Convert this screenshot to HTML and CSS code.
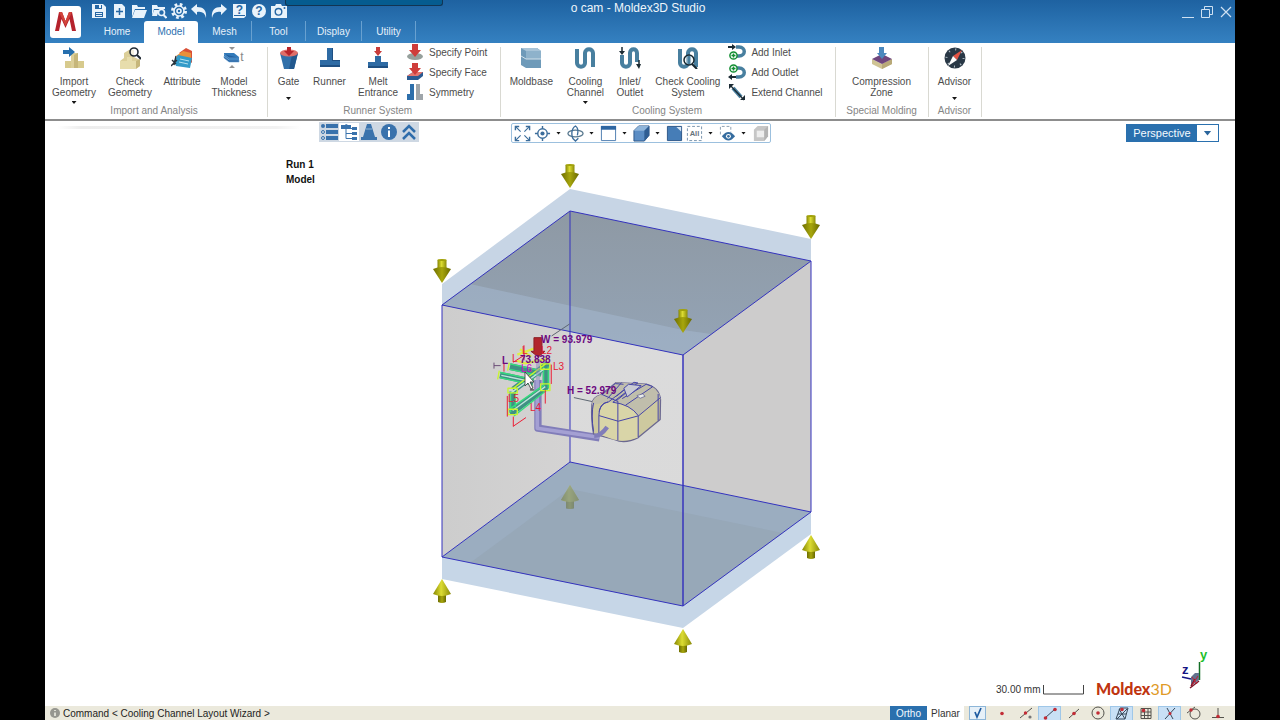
FILE: index.html
```html
<!DOCTYPE html>
<html lang="en">
<head>
<meta charset="utf-8">
<title>o cam - Moldex3D Studio</title>
<link rel="stylesheet" href="styles.css">
</head>
<body>
<div class="app">
  <header class="header">
    <div class="titlebar">
      <div class="quick">
        <button class="quick-btn" aria-label="Save"><svg viewBox="0 0 16 16"><path d="M1 1h11l3 3v11H1z" fill="#e9f3fb"/><path d="M4 2h7v4H4zM4 9h8v5H4z" fill="#2667a4"/><path d="M8 2h2v3H8zM5 10h6v1H5zM5 12h6v1H5z" fill="#e9f3fb"/></svg></button>
        <button class="quick-btn" aria-label="New"><svg viewBox="0 0 16 16"><path d="M3 1h8l3 3v11H3z" fill="#e9f3fb"/><path d="M8.500 5v7M5 8.500h7" stroke="#2667a4" stroke-width="1.500"/></svg></button>
        <button class="quick-btn" aria-label="Open"><svg viewBox="0 0 16 16"><path d="M1 14V2h5l1 2h7v2H4z" fill="#e9f3fb"/><path d="M4 7h12l-3 8H1z" fill="#e9f3fb"/></svg></button>
        <button class="quick-btn" aria-label="Find project"><svg viewBox="0 0 16 16"><path d="M1 13V2h5l1 2h7v2H3z" fill="#e9f3fb"/><path d="M3 7h5l-2 6H1z" fill="#e9f3fb"/><circle cx="10.500" cy="9.500" r="3" fill="none" stroke="#e9f3fb" stroke-width="1.600"/><path d="M12.500 12l3 3" stroke="#e9f3fb" stroke-width="2"/></svg></button>
        <button class="quick-btn" aria-label="Settings"><svg viewBox="0 0 16 16"><circle cx="8" cy="8" r="6.500" fill="none" stroke="#e9f3fb" stroke-width="3" stroke-dasharray="2.600 2.500"/><circle cx="8" cy="8" r="5" fill="none" stroke="#e9f3fb" stroke-width="1.600"/><circle cx="8" cy="8" r="2" fill="none" stroke="#e9f3fb" stroke-width="1.600"/></svg></button>
        <button class="quick-btn" aria-label="Undo"><svg viewBox="0 0 16 16"><path d="M0 6l6-5v3c6 0 10 3 9 11-1-5-4-7-9-6v3z" fill="#e9f3fb"/></svg></button>
        <button class="quick-btn" aria-label="Redo"><svg viewBox="0 0 16 16"><path d="M16 6l-6-5v3C4 4 0 7 1 15c1-5 4-7 9-6v3z" fill="#e9f3fb"/></svg></button>
        <button class="quick-btn" aria-label="Manual"><svg viewBox="0 0 16 16"><path d="M2 1h13v12l-2 2H2z" fill="#e9f3fb"/><path d="M3 12.500h11" stroke="#2667a4"/><text x="8.500" y="10.500" class="glyph glyph-blue">?</text></svg></button>
        <button class="quick-btn" aria-label="Help"><svg viewBox="0 0 16 16"><circle cx="8" cy="8" r="7" fill="#e9f3fb"/><text x="8" y="12" class="glyph glyph-blue">?</text></svg></button>
        <button class="quick-btn" aria-label="Capture"><svg viewBox="0 0 16 16"><path d="M0 3h4l1-2h5l1 2h5v12H0z" fill="#e9f3fb"/><circle cx="7.500" cy="8.800" r="3.300" fill="none" stroke="#2667a4" stroke-width="1.400"/><circle cx="13.500" cy="5" r="1" fill="#2667a4"/></svg></button>
      </div>
      <h1 class="title">o cam - Moldex3D Studio</h1>
      <div class="window-controls">
        <button class="win-btn" aria-label="Minimize"><svg viewBox="0 0 14 14"><path d="M1 12.500h12" stroke="#cfe1f2"/></svg></button>
        <button class="win-btn" aria-label="Restore"><svg viewBox="0 0 14 14"><path d="M1.500 4.500h8v8h-8zM4.500 4V1.500h8v8H10" fill="none" stroke="#cfe1f2"/></svg></button>
        <button class="win-btn" aria-label="Close"><svg viewBox="0 0 14 14"><path d="M2 2l10 10M12 2L2 12" stroke="#cfe1f2" stroke-width="1.200"/></svg></button>
      </div>
    </div>
    <button class="logo" aria-label="Application menu"><svg viewBox="0 0 31 32"><path d="M5 25L9 6h3l3.500 9L19 6h3l4 19h-4l-2.500-12-4 9-4-9L9 25z" fill="#b5222c"/><path d="M9 6h3l3.500 9L19 6h3l-6.500 14z" fill="#d2453c"/></svg></button>
    <nav class="tabs">
      <a class="tab" href="#home">Home</a>
      <a class="tab tab-active" href="#model" aria-current="page">Model</a>
      <a class="tab tab-lined" href="#mesh">Mesh</a>
      <a class="tab tab-lined" href="#tool">Tool</a>
      <a class="tab tab-lined tab-wide" href="#display">Display</a>
      <a class="tab tab-lined" href="#utility">Utility</a>
    </nav>
    <div class="top-flap"></div>
  </header>

  <section class="ribbon">
    <div class="group">
      <div class="items">
        <button class="item item-md"><svg class="big-icon" viewBox="0 0 22 22"><path d="M2 14h6V6h7v8h6v7H2z" fill="#dccf99"/><path d="M15 6l-4 2v13h4z" fill="#c6b67a"/><path d="M2 14h6v7H2zM15 14h6v7h-6z" fill="#d7ca8d"/><path d="M0 3h6V0l6 5-6 5V7H0z" fill="#266fae"/></svg><span>Import<br>Geometry</span><i class="caret"></i></button>
        <button class="item item-md"><svg class="big-icon" viewBox="0 0 22 22"><path d="M1 14l4-3V6l5-3h5v7l6 3v6l-5 3H1z" fill="#dccf99"/><path d="M1 14h7v-4h5v4h4v8H1z" fill="#e7ddac"/><path d="M17 14l4-2v7l-4 3z" fill="#c6b67a"/><circle cx="15" cy="5" r="4" fill="#fff" fill-opacity=".7" stroke="#222b35" stroke-width="1.600"/><path d="M18 8l4 4" stroke="#222b35" stroke-width="2"/></svg><span>Check<br>Geometry</span></button>
        <button class="item item-sm"><svg class="big-icon" viewBox="0 0 22 22"><path d="M8 6l7-5 6 3v12z" fill="#d95037"/><path d="M5 9l7-5 8 2v10z" fill="#e9903a"/><path d="M7 8l14 3-2 10-14-2-2-5z" fill="#329bc9"/><path d="M9 12l9 2M8 15l9 2" stroke="#b2e1ef"/><path d="M0 19l6-6M1 13l4 4M5 9l-2 9" stroke="#28323b" stroke-width="1.400"/></svg><span>Attribute</span></button>
        <button class="item item-md"><svg class="big-icon" viewBox="0 0 22 22"><path d="M1 6h10l5 4v3H6L1 9z" fill="#337bbb"/><path d="M1 7l5 4h10M1 9l5 4h10v2H6l-5-4z" fill="#2462a2" stroke="#70a8d9" stroke-width=".6"/><path d="M6 0h6l-3 3zM6 21h6l-3-3z" fill="#939393"/><text x="19" y="14" class="glyph glyph-gray">t</text></svg><span>Model<br>Thickness</span></button>
      </div>
      <div class="group-name">Import and Analysis</div>
    </div>
    <div class="group">
      <div class="items">
        <button class="item item-xs"><svg class="big-icon" viewBox="0 0 22 22"><path d="M2 6l4 16h10l4-16z" fill="#3170aa"/><path d="M14 8l6-2-4 16h-5z" fill="#22588e"/><ellipse cx="11" cy="6" rx="9" ry="3.500" fill="#df6f69"/><path d="M9 0h4v4h3l-5 5-5-5h3z" fill="#b8252c"/></svg><span>Gate</span><i class="caret"></i></button>
        <button class="item item-xs"><svg class="big-icon" viewBox="0 0 22 22"><path d="M8 1h6v12h7v7H1v-7h7z" fill="#2e6ba4"/><path d="M13 1h1v12h7v1h-8zM1 18h20v2H1z" fill="#1e4f82"/></svg><span>Runner</span></button>
        <button class="item item-md"><svg class="big-icon" viewBox="0 0 22 22"><path d="M8 9h6v6h7v6H1v-6h7z" fill="#2e6ba4"/><path d="M1 19h20v2H1z" fill="#1e4f82"/><path d="M9 0h4v4h2l-4 5-4-5h2z" fill="#c83c3a"/></svg><span>Melt<br>Entrance</span></button>
        <div class="list">
          <button class="row"><svg class="row-icon" viewBox="0 0 18 18"><ellipse cx="9" cy="13.500" rx="8" ry="3.500" fill="#96a09c"/><path d="M6 1h6v6h3l-6 7-6-7h3z" fill="#cf3d3b"/></svg>Specify Point</button>
          <button class="row"><svg class="row-icon" viewBox="0 0 18 18"><path d="M1 13l6-4h10v4l-5 4H1z" fill="#2b5b92"/><path d="M1 13l6-4h10l-5 4z" fill="#e4756e"/><path d="M6 0h6v5h3l-6 7-6-7h3z" fill="#cf3d3b"/></svg>Specify Face</button>
          <button class="row"><svg class="row-icon" viewBox="0 0 18 18"><path d="M4 1h4v16H1v-6h3z" fill="#2d6fab"/><path d="M10 1h4v10h3v6h-7z" fill="#9ea5aa"/></svg>Symmetry</button>
        </div>
      </div>
      <div class="group-name">Runner System</div>
    </div>
    <div class="group group-wide">
      <div class="items">
        <button class="item item-lg"><svg class="big-icon" viewBox="0 0 22 22"><path d="M1 1h16l4 3v17H6l-5-3z" fill="#6e9ab9"/><path d="M1 1h16l4 3H6z" fill="#a8c4d8"/><path d="M6 4h15v8H6z" fill="#8eb2cb"/><path d="M1 9l5 3h15" fill="none" stroke="#d1e0e9"/></svg><span>Moldbase</span></button>
        <button class="item item-sm"><svg class="big-icon" viewBox="0 0 22 22"><path d="M3 2v14c0 5 8 5 8 0V6c0-5 8-5 8 0v14" fill="none" stroke="#487f9f" stroke-width="4"/></svg><span>Cooling<br>Channel</span><i class="caret"></i></button>
        <button class="item item-xs"><svg class="big-icon" viewBox="0 0 22 22"><path d="M3 8v8c0 5 8 5 8 0V6c0-5 7-5 7 0v9" fill="none" stroke="#487f9f" stroke-width="4"/><path d="M3 0v4M20 13v5" stroke="#1c2b33" stroke-width="1.500"/><path d="M0 4h6L3 8zM17 17h5l-2 5z" fill="#1c2b33"/></svg><span>Inlet/<br>Outlet</span></button>
        <button class="item item-xl"><svg class="big-icon" viewBox="0 0 22 22"><path d="M3 2v14c0 5 8 5 8 0V6c0-5 8-5 8 0v14" fill="none" stroke="#487f9f" stroke-width="4"/><circle cx="12" cy="13" r="5" fill="#e8f2f5" fill-opacity=".6" stroke="#162730" stroke-width="1.500"/><path d="M12 9v8" stroke="#487f9f" stroke-width="3"/><path d="M15 17l5 5" stroke="#162730" stroke-width="2"/></svg><span>Check Cooling<br>System</span></button>
        <div class="list list-spaced">
          <button class="row"><svg class="row-icon" viewBox="0 0 18 18"><path d="M8 4h3c7 0 7 9 0 9H9" fill="none" stroke="#487f9f" stroke-width="3.500"/><circle cx="5.500" cy="12.500" r="3.600" fill="#fff" stroke="#118e32" stroke-width="1.500"/><path d="M5.500 10.500v4M3.500 12.500h4" stroke="#118e32" stroke-width="1.500"/><path d="M0 3h4V1l4 3-4 3V5H0z" fill="#1b2b34"/></svg>Add Inlet</button>
          <button class="row"><svg class="row-icon" viewBox="0 0 18 18"><path d="M9 5h2c7 0 7 9 0 9H8" fill="none" stroke="#487f9f" stroke-width="3.500"/><circle cx="5.500" cy="5.500" r="3.600" fill="#fff" stroke="#118e32" stroke-width="1.500"/><path d="M5.500 3.500v4M3.500 5.500h4" stroke="#118e32" stroke-width="1.500"/><path d="M8 13H4v-2l-4 3 4 3v-2h4z" fill="#1b2b34"/></svg>Add Outlet</button>
          <button class="row"><svg class="row-icon" viewBox="0 0 18 18"><path d="M5 5l8 9" stroke="#487f9f" stroke-width="4"/><path d="M2 2l14 15" stroke="#1b2b34" stroke-width="1.200"/><path d="M1 1h5L1 6zM17 17v-5l-5 5z" fill="#1b2b34"/></svg>Extend Channel</button>
        </div>
      </div>
      <div class="group-name">Cooling System</div>
    </div>
    <div class="group group-center">
      <div class="items">
        <button class="item item-xl"><svg class="big-icon" viewBox="0 0 22 22"><path d="M1 12l10 5 10-5v5l-10 5-10-5z" fill="#cfc394"/><path d="M11 17l10-5v5l-10 5z" fill="#b8a978"/><path d="M1 12l10-5 10 5-10 5z" fill="#6f467d"/><path d="M8 0h5v6h3l-5 6-5-6h2z" fill="#4b88bd"/></svg><span>Compression<br>Zone</span></button>
      </div>
      <div class="group-name">Special Molding</div>
    </div>
    <div class="group group-center">
      <div class="items">
        <button class="item item-sm"><svg class="big-icon" viewBox="0 0 22 22"><circle cx="11" cy="11" r="10.500" fill="#293846"/><circle cx="11" cy="11" r="8.500" fill="none" stroke="#b8c4cb" stroke-width="2" stroke-dasharray="1 5.675"/><path d="M18 3l-9 6 4 4z" fill="#e25445"/><path d="M4 19l5-10 4 4z" fill="#fff"/></svg><span>Advisor</span><i class="caret"></i></button>
      </div>
      <div class="group-name">Advisor</div>
    </div>
  </section>

  <div class="viewbar">
    <div class="ghost"></div>
    <div class="panel-tools">
      <button class="tool" aria-label="List"><svg viewBox="0 0 18 18"><path d="M6 1h12v4H6zM6 7h12v4H6zM6 13h12v4H6z" fill="#3972ac"/><circle cx="3" cy="3" r="2" fill="#3972ac"/><circle cx="3" cy="9" r="1.500" fill="none" stroke="#3972ac"/><circle cx="3" cy="15" r="1.500" fill="none" stroke="#3972ac"/></svg></button>
      <button class="tool tool-on" aria-label="Tree"><svg viewBox="0 0 18 18"><path d="M1 2h4l1-1 2 1h3v4H1zM12 4h5v3h-5zM12 9h5v3h-5zM12 14h5v3h-5z" fill="#3972ac"/><path d="M6 5v10.500h6M6 10.500h6M6 5.500h6" fill="none" stroke="#3972ac"/></svg></button>
      <button class="tool" aria-label="Layers"><svg viewBox="0 0 18 18"><path d="M7 1h4l4 13h2v3H1v-3h2z" fill="#3972ac"/><path d="M6 6h6" stroke="#8fb3d4"/></svg></button>
      <button class="tool" aria-label="Information"><svg viewBox="0 0 18 18"><circle cx="9" cy="9" r="8" fill="#3972ac"/><path d="M9 4v2M9 7.500V14" stroke="#fff" stroke-width="2"/></svg></button>
      <button class="tool" aria-label="Collapse"><svg viewBox="0 0 18 18"><path d="M3 9l6-6 6 6M3 16l6-6 6 6" fill="none" stroke="#2f6dab" stroke-width="2.500"/></svg></button>
    </div>
    <div class="view-tools">
      <button class="tool" aria-label="Fit view"><svg viewBox="0 0 18 18"><path d="M2 2l5 5M16 2l-5 5M2 16l5-5M16 16l-5-5" stroke="#3c6d9b" stroke-width="1.200"/><path d="M1.500 5.500v-4h4M12.500 1.500h4v4M1.500 12.500v4h4M12.500 16.500h4v-4" fill="none" stroke="#3c6d9b" stroke-width="1.500"/></svg></button>
      <button class="tool" aria-label="Center"><svg viewBox="0 0 18 18"><circle cx="9" cy="9" r="5" fill="none" stroke="#3c6d9b" stroke-width="1.500"/><circle cx="9" cy="9" r="2.200" fill="#3c6d9b"/><path d="M9 1v3M9 14v3M1 9h3M14 9h3" stroke="#3c6d9b" stroke-width="1.500"/></svg></button>
      <button class="drop" aria-label="Center options"><i class="caret"></i></button>
      <button class="tool" aria-label="Rotate"><svg viewBox="0 0 18 18"><ellipse cx="9" cy="9" rx="8" ry="3.500" fill="none" stroke="#59798f" stroke-width="1.400"/><path d="M8 16c-4-3-4-12 1-15 3 2 3 6 2 10M6 14l3 3 3-3" fill="none" stroke="#3c6d9b" stroke-width="1.400"/></svg></button>
      <button class="drop" aria-label="Rotate options"><i class="caret"></i></button>
      <button class="tool" aria-label="Window"><svg viewBox="0 0 18 18"><path d="M1.500 1.500h15v15h-15z" fill="#fff" stroke="#4b7bae"/><path d="M1 1h16v4H1z" fill="#2d66a2"/></svg></button>
      <button class="drop" aria-label="Window options"><i class="caret"></i></button>
      <button class="tool" aria-label="Display style"><svg viewBox="0 0 18 18"><path d="M1 6l5-5h11v10l-5 6H1z" fill="#5b8dc4" stroke="#2d5687"/><path d="M1 6l5-5h11l-5 5z" fill="#8fb5da"/><path d="M12 6l5-5v10l-5 6z" fill="#2f5d92"/></svg></button>
      <button class="drop" aria-label="Display options"><i class="caret"></i></button>
      <button class="tool" aria-label="Select face"><svg viewBox="0 0 18 18"><path d="M1.500 1.500h15v15h-15z" fill="#467db7" stroke="#2d5687"/><path d="M11 2h5v5z" fill="#d9e8f6"/></svg></button>
      <button class="tool" aria-label="Select all"><svg viewBox="0 0 18 18"><path d="M1.500 1.500h15v15h-15z" fill="none" stroke="#7590aa" stroke-dasharray="3 2"/><text x="9" y="12" class="glyph glyph-all">All</text></svg></button>
      <button class="drop" aria-label="Select options"><i class="caret"></i></button>
      <button class="tool" aria-label="Visibility"><svg viewBox="0 0 18 18"><path d="M1.500 10V1.500h11V8" fill="none" stroke="#879bad" stroke-dasharray="3 2"/><path d="M3 12q7-9 14 0-7 9-14 0z" fill="#356c9f"/><circle cx="10" cy="12" r="2.600" fill="#fff"/><circle cx="10" cy="12" r="1.400" fill="#356c9f"/></svg></button>
      <button class="drop" aria-label="Visibility options"><i class="caret"></i></button>
      <button class="tool" aria-label="Box"><svg viewBox="0 0 18 18"><path d="M2 5l4-4h11v11l-4 5H2z" fill="#c6c6c6"/><path d="M5 6h8v7H5z" fill="#ededed"/><path d="M13 5l4-4v11l-4 5z" fill="#b3b3b3"/></svg></button>
    </div>
    <div class="projection">
      <button class="projection-name">Perspective</button>
      <button class="projection-drop" aria-label="Choose projection"><i class="caret caret-blue"></i></button>
    </div>
  </div>

  <main class="viewport">
    <svg class="scene" viewBox="45 145 1190 561" role="img" aria-label="Mold model view">
      <defs>
        <linearGradient id="cone"><stop offset="0" stop-color="#858500"/><stop offset=".45" stop-color="#dcdc32"/><stop offset="1" stop-color="#8a8a08"/></linearGradient>
        <linearGradient id="coneDown"><stop offset="0" stop-color="#6e6e00"/><stop offset=".5" stop-color="#a7a60c"/><stop offset="1" stop-color="#686800"/></linearGradient>
        <linearGradient id="wall"><stop offset="0" stop-color="#cdcdcd"/><stop offset="1" stop-color="#d4d3d3"/></linearGradient>
        <linearGradient id="back" x1="0" y1="0" x2="0" y2="1"><stop offset="0" stop-color="#dcdcdd"/><stop offset="1" stop-color="#dadada"/></linearGradient>
        <linearGradient id="deck" x1="0" y1="0" x2="0" y2="1"><stop offset="0" stop-color="#8e99a4"/><stop offset="1" stop-color="#94a4b6"/></linearGradient>
        <g id="down"><path d="M-4.500-23h9v9h-9z" fill="url(#cone)"/><path d="M-9-14q9-4 18 0L0 0z" fill="url(#coneDown)"/><ellipse cy="-23" rx="4.500" ry="1" fill="#a2a20a"/></g>
        <g id="up"><path d="M-4 14h8v9q-4 2-8 0z" fill="url(#coneDown)"/><path d="M0 0l9 15q-9 4-18 0z" fill="url(#cone)"/></g>
      </defs>
      <text x="286" y="168" class="label-bold">Run 1</text>
      <text x="286" y="183" class="label-bold">Model</text>

      <path d="M442 284L570 189 811 239V261L683 355 442 305z" fill="#c7d5e5"/>
      <path d="M442 305L570 211V462L442 557z" fill="url(#wall)"/>
      <path d="M570 211L811 261V512L570 462z" fill="url(#back)"/>
      <path d="M683 355L811 261V512L683 606z" fill="#cdcccc"/>
      <path d="M442 305L570 211 811 261 683 355z" fill="url(#deck)"/>
      <path d="M442 305L470 284 683 330 711 334 683 355z" fill="#a1b4ca" opacity=".65"/>
      <path d="M442 557L570 462 811 512V534L683 628 442 579z" fill="#c6d6e7"/>
      <path d="M442 557L570 462 811 512 683 606z" fill="#9badc0"/>
      <path d="M470 563L570 489 783 533 683 606z" fill="#929fad" opacity=".4"/>
      <path d="M442 305L570 211 811 261 683 355zM442 557L570 462 811 512 683 606zM442 305V557M570 211V462M811 261V512" fill="none" stroke="#3433bd"/>
      <path d="M683 355V606" stroke="#3734bd" stroke-width="1.500"/>
      <use href="#down" x="570" y="188"/><use href="#down" x="811" y="239"/><use href="#down" x="442" y="283"/><use href="#down" x="683" y="333"/>
      <g opacity=".6"><use href="#up" x="570" y="485"/><path d="M570 485l9 15q-4 2-5 1v8h-8v-8l-5-1z" fill="#6d7b70" opacity=".6"/></g><use href="#up" x="442" y="579"/><use href="#up" x="683" y="629"/><use href="#up" x="811" y="535"/>

      <g transform="translate(480 320) scale(.333)" fill="none" stroke-linejoin="round">
        <path d="M215 48l54-36M282 233l55 12" stroke="#5d6671" stroke-width="3"/>
        <path d="M174 180v145l185 29" stroke="#817db9" stroke-width="22"/>
        <path d="M172 180v145l185 27" stroke="#a4a0d3" stroke-width="11"/>
        <path d="M336 255q0-23 28-31l45-36 90 5q38 9 43 45l-1 61-66 54q-40 20-70 6l-64-17q-8-44-5-87z" fill="#cdc99f" stroke="#6b6890" stroke-width="4"/>
        <path d="M358 280q3-30 28-34 73 5 89 42v65q-42 15-75 6l-42-16z" fill="#d9d5a8"/>
        <path d="M336 255q0-23 28-31l45-36 90 5q38 9 43 45-35 14-66 51-25-38-91-43l-49 9z" fill="#c0beac"/>
        <path d="M358 275q5-25 28-29l76-59 12 2-75 58q52 6 77 41l66-55M341 335q-8-50 0-86M357 342v-55l58 17 60-16v65M357 287q0-38 28-41M365 223l50 22M366 225l40-34 25 2M410 242l32-26V202l-32 27M425 188l-42 48M414 245v116M427 236l72-43 20 7-82 56M535 222v80" stroke="#4544a9" stroke-width="3"/>
        <path d="M432 205l14-12 38 4-42 34z" fill="#c9cbd4" stroke="#4544a9" stroke-width="3"/>
        <path d="M343 348q20 0 39-27" stroke="#817db9" stroke-width="13"/>
        <path d="M471 227l17-5 8 7-15 6z" fill="#e9eceb" stroke="#55558a" stroke-width="2"/>
        <path d="M60 165l100 22M90 140l95 20M100 210l98-74v64L98 275v-60" stroke="#3f9184" stroke-width="20"/>
        <path d="M60 157l100 22M60 173l98 22M90 132l92 20M90 148l92 20M92 217v60M106 217v44M191 140v56M205 140v64M94 264l100-70M102 288l102-80" stroke="#35dd7c" stroke-width="4"/>
        <path d="M64 166l94 20M98 272l98-72M94 218l100-72" stroke="#bfe6da" stroke-width="4"/>
        <path d="M84 205h28v14H84zM84 268h28v16H84zM182 192h28v20h-28zM182 132h28v16h-28zM100 205l98-74M58 152l-5 26M88 128l-5 24" stroke="#c8f52f" stroke-width="4"/>
        <path d="M120 88l34 22M112 104l55-20M110 122l25 8 70-14" stroke="#e0ee44" stroke-width="7"/>
        <path d="M42 128v18M42 137h20" stroke="#6b4e77" stroke-width="3"/>
        <path d="M72 130v25M82 290v-62M100 319l38-26M100 290v30M196 251v-40M214 192v-58M132 76v45M100 127l34-22" stroke="#ec1c34" stroke-width="3"/>
        <path d="M162 53h24v41h9l-20 17-22-17h9z" fill="#b2262c" stroke="#8f2027" stroke-width="3"/>
        <path d="M174 118v62" stroke="#8e8ab8" stroke-width="12" opacity=".5"/>
        <path d="M150 210h12" stroke="#222" stroke-width="3"/>
      </g>
      <g class="dim-mark">
        <text x="541" y="354">L2</text><text x="553" y="370">L3</text><text x="530" y="411">L4</text><text x="508" y="402">L5</text><text x="522" y="354">L</text><text x="512" y="362">L</text><text x="521" y="372" class="mark-pink">L6</text>
      </g>
      <g class="dim">
        <text x="541" y="343">W = 93.979</text>
        <text x="567" y="394">H = 52.979</text>
        <text x="502" y="364">L</text><text x="520" y="363">73.838</text>
      </g>
      <path d="M525 372v14l3-3 3 6 2-1-3-6h4z" fill="#fff" stroke="#343434" stroke-width=".8"/>

      <text x="996" y="693" class="scale-text">30.00 mm</text>
      <path d="M1043.500 685v9h40v-9" fill="none" stroke="#444"/>
      <text x="1096" y="695" class="brand">Moldex<tspan class="brand-light">3D</tspan></text>
      <path d="M1199.500 662v18" stroke="#136e25" stroke-width="1.500"/>
      <path d="M1191 677l4-4h4v7l-8 6z" fill="#63718e"/><path d="M1199 681l-9 7M1191 686l4-7" stroke="#80162b" stroke-width="1.500"/>
      <path d="M1182 677l9 2" stroke="#151584" stroke-width="1.500"/>
      <path d="M1192 677l5 7M1198 676l-6 9" stroke="#c22134"/>
      <text x="1200" y="659" class="axis axis-y">y</text>
      <text x="1182" y="674" class="axis axis-z">z</text>
    </svg>
  </main>

  <footer class="status">
    <svg class="status-icon" viewBox="0 0 12 12"><circle cx="6" cy="6" r="5" fill="#96968f"/><path d="M6 3v1M6 5.500V9" stroke="#f4f3e9" stroke-width="1.500"/></svg>
    <span class="status-text">Command &lt; Cooling Channel Layout Wizard &gt;</span>
    <button class="mode mode-on">Ortho</button>
    <button class="mode">Planar</button>
    <div class="snaps">
      <button class="snap snap-check" aria-label="Enable snaps"><svg viewBox="0 0 14 14"><path d="M4 6l2 5 4-9" fill="none" stroke="#1d5aa0" stroke-width="1.700"/></svg></button>
      <button class="snap" aria-label="Point"><svg viewBox="0 0 14 14"><circle cx="7" cy="7.500" r="1.800" fill="#c22c35"/></svg></button>
      <button class="snap" aria-label="Near"><svg viewBox="0 0 14 14"><path d="M1 12L13 2" stroke="#54534d"/><circle cx="6.500" cy="7" r="1.700" fill="#c22c35"/><circle cx="11" cy="11" r="1.600" fill="#777"/></svg></button>
      <button class="snap snap-on" aria-label="End"><svg viewBox="0 0 14 14"><path d="M2 11L12 2" stroke="#38495a"/><circle cx="2.500" cy="11" r="1.800" fill="#c22c35"/><circle cx="12" cy="2.500" r="1.800" fill="#c22c35"/></svg></button>
      <button class="snap" aria-label="Middle"><svg viewBox="0 0 14 14"><path d="M2 12L12 3" stroke="#54534d"/><circle cx="7" cy="7.500" r="1.800" fill="#c22c35"/></svg></button>
      <button class="snap" aria-label="Center"><svg viewBox="0 0 14 14"><circle cx="7" cy="7" r="6" fill="none" stroke="#54534d"/><circle cx="7" cy="7" r="1.800" fill="#c22c35"/></svg></button>
      <button class="snap snap-on" aria-label="Surface"><svg viewBox="0 0 14 14"><path d="M1 12L5 1h8l-3 11zM3 7h8M4 2l6 10M12 2L2 12" fill="none" stroke="#38495a"/><circle cx="7" cy="2.500" r="1.800" fill="#c22c35"/></svg></button>
      <button class="snap" aria-label="Grid"><svg viewBox="0 0 14 14"><path d="M2 2.500h10v10H2zM2 6h10M2 9.500h10M5.500 2.500v10M9 2.500v10" fill="none" stroke="#54534d"/><circle cx="4.500" cy="4.500" r="1.800" fill="#c22c35"/></svg></button>
      <button class="snap snap-on" aria-label="Intersection"><svg viewBox="0 0 14 14"><path d="M2 12L12 1M4 1l6 11" stroke="#38495a"/><circle cx="7" cy="6.500" r="1.500" fill="#c22c35"/></svg></button>
      <button class="snap" aria-label="Tangent"><svg viewBox="0 0 14 14"><circle cx="8" cy="8" r="5" fill="none" stroke="#54534d"/><path d="M0 7l8-6" stroke="#54534d"/><circle cx="4" cy="4" r="1.700" fill="#c22c35"/></svg></button>
      <button class="snap" aria-label="Perpendicular"><svg viewBox="0 0 14 14"><path d="M7 2v9M1 11.500h12" stroke="#54534d"/><circle cx="7" cy="10.500" r="1.800" fill="#c22c35"/></svg></button>
    </div>
  </footer>
</div>
</body>
</html>
```
FILE: styles.css
```css
* { box-sizing: border-box; }
html, body { height: 100%; margin: 0; }
body {
  background: #000;
  padding: 0 45px;
  font: 10px/11px "Liberation Sans", Arial, sans-serif;
  color: #4c4c4c;
}
button {
  font: inherit;
  color: inherit;
  border: 0;
  padding: 0;
  margin: 0;
  background: none;
}
svg { display: block; }
.app {
  height: 100%;
  display: flex;
  flex-direction: column;
  background: #fff;
  overflow: hidden;
}

.header {
  position: relative;
  flex: none;
  display: grid;
  grid-template-columns: 45px 1fr;
  grid-template-rows: 21px 22px;
  background: linear-gradient(#1e62a1, #3581c1);
}
.titlebar {
  grid-column: 1 / 3;
  grid-row: 1;
  display: grid;
  grid-template-columns: 1fr auto 1fr;
  align-items: center;
}
.quick { display: flex; padding-left: 44px; }
.quick-btn {
  width: 20px;
  display: flex;
  justify-content: center;
}
.quick-btn svg { width: 16px; height: 16px; }
.title {
  margin: 0 4px 6px 0;
  font-size: 12px;
  line-height: 14px;
  font-weight: 400;
  color: #eef5fb;
}
.window-controls {
  display: flex;
  justify-content: flex-end;
  gap: 5px;
  padding: 3px 2px 0 0;
}
.win-btn svg { width: 14px; height: 14px; }
.logo {
  grid-column: 1;
  grid-row: 1 / 3;
  z-index: 1;
  align-self: center;
  margin-left: 5px;
  width: 31px;
  height: 32px;
  background: #fff;
  border-radius: 3px;
}
.tabs {
  grid-column: 2;
  grid-row: 2;
  display: flex;
}
.tab {
  flex: none;
  width: 54px;
  line-height: 21px;
  text-align: center;
  color: #e6f0f9;
  text-decoration: none;
}
.tab-active {
  background: #fff;
  color: #2b70b0;
  border-radius: 3px 3px 0 0;
}
.tab-lined {
  border-right: 1px solid #69a1d0;
  height: 20px;
}
.tab-wide { width: 56px; }
.top-flap {
  position: absolute;
  left: 240px;
  top: 0;
  width: 158px;
  height: 6px;
  background: #055c90;
  border: 1px solid #123553;
  border-top: 0;
  border-radius: 0 0 3px 3px;
}

.ribbon {
  flex: none;
  height: 78px;
  display: flex;
  padding: 4px 0 2px;
  border-bottom: 2px solid #8d8d8d;
}
.group {
  display: flex;
  flex-direction: column;
  padding-right: 13px;
  border-right: 1px solid #d9d9d2;
}
.group:first-child { padding: 0 5px 0 1px; }
.group-wide .items { padding-right: 10px; }
.group-wide { padding-right: 2px; }
.group-center { padding: 0 3px; }
.items { flex: 1; display: flex; }
.item {
  display: flex;
  flex-direction: column;
  align-items: center;
}
.item-xs { width: 41px; }
.item-sm { width: 48px; }
.item-md { width: 56px; }
.item-lg { width: 60px; }
.item-xl { width: 75px; }
.group-center .item-xl { width: 86px; }
.group-center .item-sm { width: 46px; }
.item span { white-space: nowrap; }
.big-icon { width: 22px; height: 22px; margin-bottom: 7px; }
.caret {
  width: 5px;
  height: 3px;
  background: #161616;
  clip-path: polygon(0 0, 100% 0, 50% 100%);
}
.item .caret { margin-top: 3px; }
.item-xs .caret, .group-center .caret { margin-top: 10px; }
.list { display: flex; flex-direction: column; margin-top: -5px; }
.list-spaced { margin-left: 3px; }
.row {
  display: flex;
  align-items: center;
  gap: 5px;
  height: 20px;
  white-space: nowrap;
}
.row-icon { width: 18px; height: 18px; }
.group-name {
  text-align: center;
  color: #858585;
  line-height: 12px;
}
.glyph { font: bold 12px "Liberation Sans", Arial, sans-serif; text-anchor: middle; }
.glyph-blue { fill: #2667a4; }
.glyph-gray { fill: #888; font-weight: 400; }
.glyph-all { fill: #66727c; font-size: 8px; }

.viewbar {
  flex: none;
  display: flex;
  align-items: flex-start;
  height: 24px;
  padding: 1px 16px 0 12px;
}
.ghost {
  width: 244px;
  height: 3px;
  margin: 4px 18px 0 0;
  background: linear-gradient(90deg, #fff, #ededed 10%, #f2f2f2 90%, #fff);
}
.panel-tools {
  display: flex;
  background: #ced8e3;
  height: 20px;
  align-items: center;
}
.tool {
  width: 20px;
  height: 18px;
  display: flex;
  justify-content: center;
  align-items: center;
}
.tool svg { width: 18px; height: 18px; }
.view-tools .tool svg { width: 17px; height: 17px; }
.tool-on { background: #fff; }
.view-tools {
  display: flex;
  margin: 1px 0 0 92px;
  height: 20px;
  border: 1px solid #9cc0de;
  border-radius: 2px;
}
.drop {
  width: 13px;
  display: flex;
  align-items: center;
  justify-content: center;
}
.projection {
  display: flex;
  margin: 2px 0 0 auto;
  height: 18px;
  border: 1px solid #2a70ae;
}
.projection-name {
  width: 70px;
  background: #2a70ae;
  color: #f5faff;
  font-size: 11px;
}
.projection-drop {
  width: 21px;
  display: flex;
  align-items: center;
  justify-content: center;
}
.caret-blue { width: 8px; height: 5px; background: #2a659c; }

.viewport { flex: 1; min-height: 0; }
.scene { width: 100%; height: 100%; }
.scene text { font-family: "Liberation Sans", Arial, sans-serif; font-size: 10px; }
.scene .label-bold { font-weight: 700; fill: #111; }
.dim text { fill: #6c087f; font-weight: 700; }
.dim-mark text { fill: #e51b38; }
.dim-mark .mark-pink { fill: #d400c8; }
.scene .scale-text { fill: #333; }
.scene .brand { font: 900 16px Lato, sans-serif; fill: #bf3510; }
.scene .brand-light { font-weight: 400; fill: #e09a27; }
.scene .axis { font-size: 13px; font-weight: 700; }
.axis-y { fill: #1ebf2d; }
.axis-z { fill: #151584; }

.status {
  flex: none;
  height: 14px;
  display: flex;
  align-items: center;
  padding: 0 6px 0 4px;
  background: #ebe9dc;
  color: #1d1d1d;
}
.status-icon { width: 12px; height: 12px; margin-right: 2px; }
.status-text { flex: 1; }
.mode {
  width: 37px;
  height: 14px;
  background: #fff;
  color: #333;
}
.mode-on { background: #2a70ae; color: #f5faff; }
.snaps { display: flex; gap: 1px; margin-left: 2px; }
.snap {
  width: 23px;
  height: 14px;
  display: flex;
  justify-content: center;
  align-items: center;
}
.snap svg { flex: none; width: 14px; height: 14px; }
.snap-on { background: #c9e0f5; border: 1px solid #9fc7e8; border-bottom: 0; }
.snap-check { background: #e6f0f8; border: 1px solid #8db6d8; width: 17px; margin: 0 3px; }
```
